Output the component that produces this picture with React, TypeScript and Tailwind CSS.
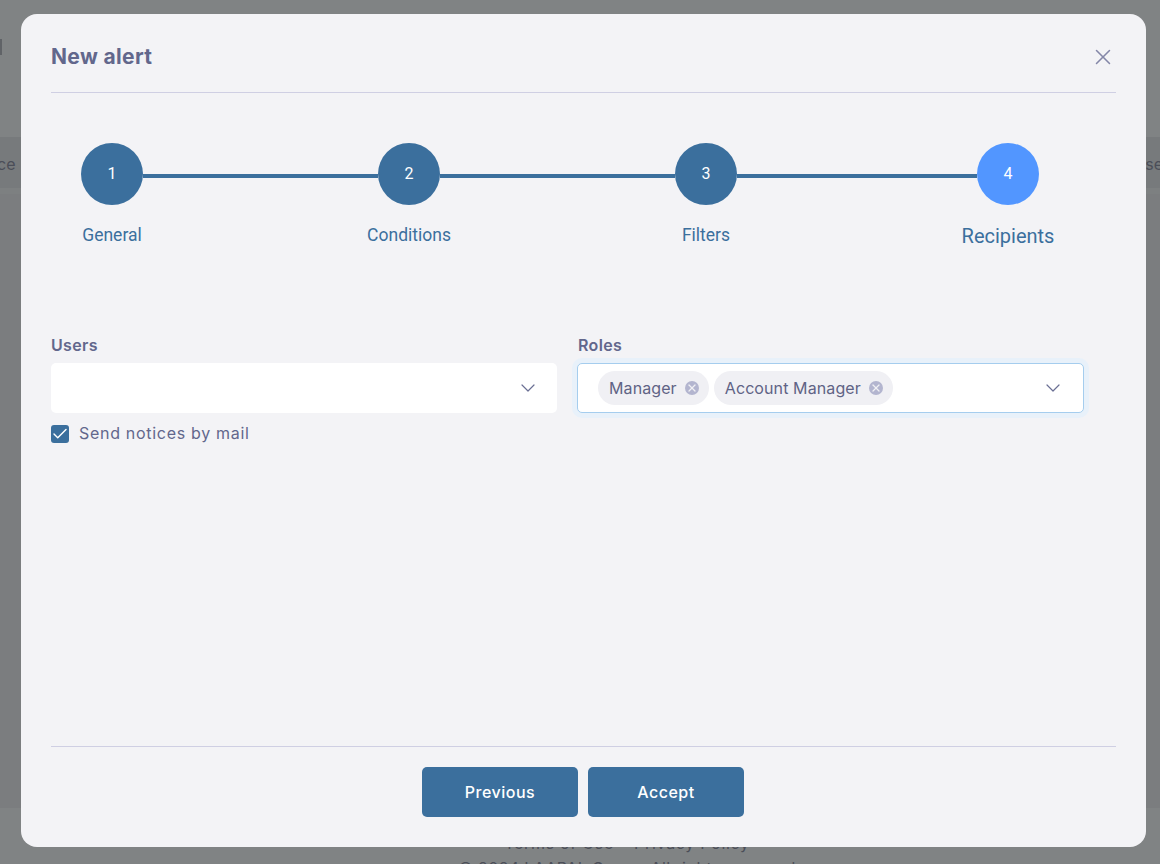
import React from "react";
import { X, ChevronDown, Check } from "lucide-react";

const Step = ({ n, label, active }: { n: string; label: string; active?: boolean }) => (
  <div className="flex w-[62px] shrink-0 flex-col items-center font-['Roboto',sans-serif]">
    <div className={`flex h-[62px] w-[62px] shrink-0 items-center justify-center rounded-full text-[16px] text-white ${active ? "bg-[#5296ff]" : "bg-[#3b6f9d]"}`}>{n}</div>
    <div className={`mt-[18px] whitespace-nowrap text-[#3b6f9d] ${active ? "text-[20px] leading-[26px]" : "text-[17.5px] leading-[24px]"}`}>{label}</div>
  </div>
);

const Chip = ({ label }: { label: string }) => (
  <div className="flex h-[34px] items-center gap-[8px] rounded-full bg-[#f0f0f4] pl-[11px] pr-[10px] text-[16px] tracking-[0.1px] text-[#5f6385]">
    <span>{label}</span>
    <span className="flex h-[14px] w-[14px] items-center justify-center rounded-full bg-[#b3b5cf]">
      <X size={12} strokeWidth={2.5} color="#f0f0f4" />
    </span>
  </div>
);

export default function App() {
  return (
    <div className="relative h-[864px] w-[1160px] overflow-hidden bg-[#808384] font-['Inter',sans-serif]">
      <div className="flex h-full flex-col">
        <div className="flex h-[137px] shrink-0 items-start pt-[39px]">
          <div className="h-[16px] w-[2px] bg-[#606367]" />
        </div>
        <div className="flex h-[51px] shrink-0 items-center justify-between bg-[#777a7c] pt-[2px] text-[16px] text-[#4b4e58]">
          <span className="-ml-[3px]">ce</span>
          <span className="-mr-[3px]">se</span>
        </div>
        <div className="h-[6px] shrink-0 bg-[#7d8081]" />
        <div className="h-[614px] shrink-0 bg-[#7b7d7f]" />
        <div className="flex h-[56px] shrink-0 flex-col items-center bg-[#808384] pl-[94px] pt-[23px] text-[16px] leading-[25px] text-[#4b4e58]">
          <span className="whitespace-nowrap tracking-[0.7px]">Terms of Use • Privacy Policy</span>
          <span className="whitespace-nowrap tracking-[0.4px]">© 2024 LAAPAL Group. All rights reserved</span>
        </div>
      </div>

      <div className="absolute left-[21px] top-[14px] flex h-[833px] w-[1125px] flex-col rounded-[16px] bg-[#f3f3f6] px-[30px]">
        <div className="flex h-[79px] shrink-0 items-center justify-between border-b border-[#cfcfe3] pt-[7px]">
          <h2 className="pt-[1px] text-[21px] font-bold tracking-[0.35px] text-[#62678c]">New alert</h2>
          <X size={26} strokeWidth={1.4} color="#8487a8" className="mt-[1px]" />
        </div>

        <div className="mt-[50px] flex items-start pl-[30px]">
          <Step n="1" label="General" />
          <div className="mt-[31px] h-[4px] w-[235px] bg-[#3b6f9d]" />
          <Step n="2" label="Conditions" />
          <div className="mt-[31px] h-[4px] w-[235px] bg-[#3b6f9d]" />
          <Step n="3" label="Filters" />
          <div className="mt-[31px] h-[4px] w-[240px] bg-[#3b6f9d]" />
          <Step n="4" label="Recipients" active />
        </div>

        <div className="mt-[85px] flex gap-[20px]">
          <div className="w-[506px]">
            <div className="text-[16px] font-semibold leading-[22px] tracking-[0.35px] text-[#62678c]">Users</div>
            <div className="mt-[7px] flex h-[50px] items-center justify-end rounded-[5px] bg-white pr-[17px]">
              <ChevronDown size={24} strokeWidth={1.2} color="#6a6f94" />
            </div>
            <div className="mt-[10px] flex h-[22px] items-center gap-[10px]">
              <div className="flex h-[18px] w-[18px] items-center justify-center rounded-[3px] bg-[#3b6f9d]">
                <Check size={18} strokeWidth={1.9} color="#fff" />
              </div>
              <span className="pb-[2px] text-[16px] leading-[22px] tracking-[0.7px] text-[#62678c]">Send notices by mail</span>
            </div>
          </div>
          <div className="w-[507px]">
            <div className="pl-[1px] text-[16px] font-semibold leading-[22px] tracking-[0.35px] text-[#62678c]">Roles</div>
            <div className="mt-[7px] flex h-[50px] items-center justify-between rounded-[5px] border border-[#a5cdee] bg-white pl-[20px] pr-[18px] shadow-[0_0_0_5px_#e8f1fa]">
              <div className="flex gap-[5px]">
                <Chip label="Manager" />
                <Chip label="Account Manager" />
              </div>
              <ChevronDown size={24} strokeWidth={1.2} color="#6a6f94" />
            </div>
          </div>
        </div>

        <div className="mt-auto flex h-[101px] shrink-0 justify-center gap-[10px] border-t border-[#cfcfe3] pr-[2px] pt-[20px]">
          <button className="h-[50px] w-[156px] rounded-[5px] bg-[#3b6f9d] pl-[1px] text-[16px] font-medium tracking-[0.5px] text-white">Previous</button>
          <button className="h-[50px] w-[156px] rounded-[5px] bg-[#3b6f9d] pl-[1px] text-[16px] font-medium tracking-[0.5px] text-white">Accept</button>
        </div>
      </div>
    </div>
  );
}
